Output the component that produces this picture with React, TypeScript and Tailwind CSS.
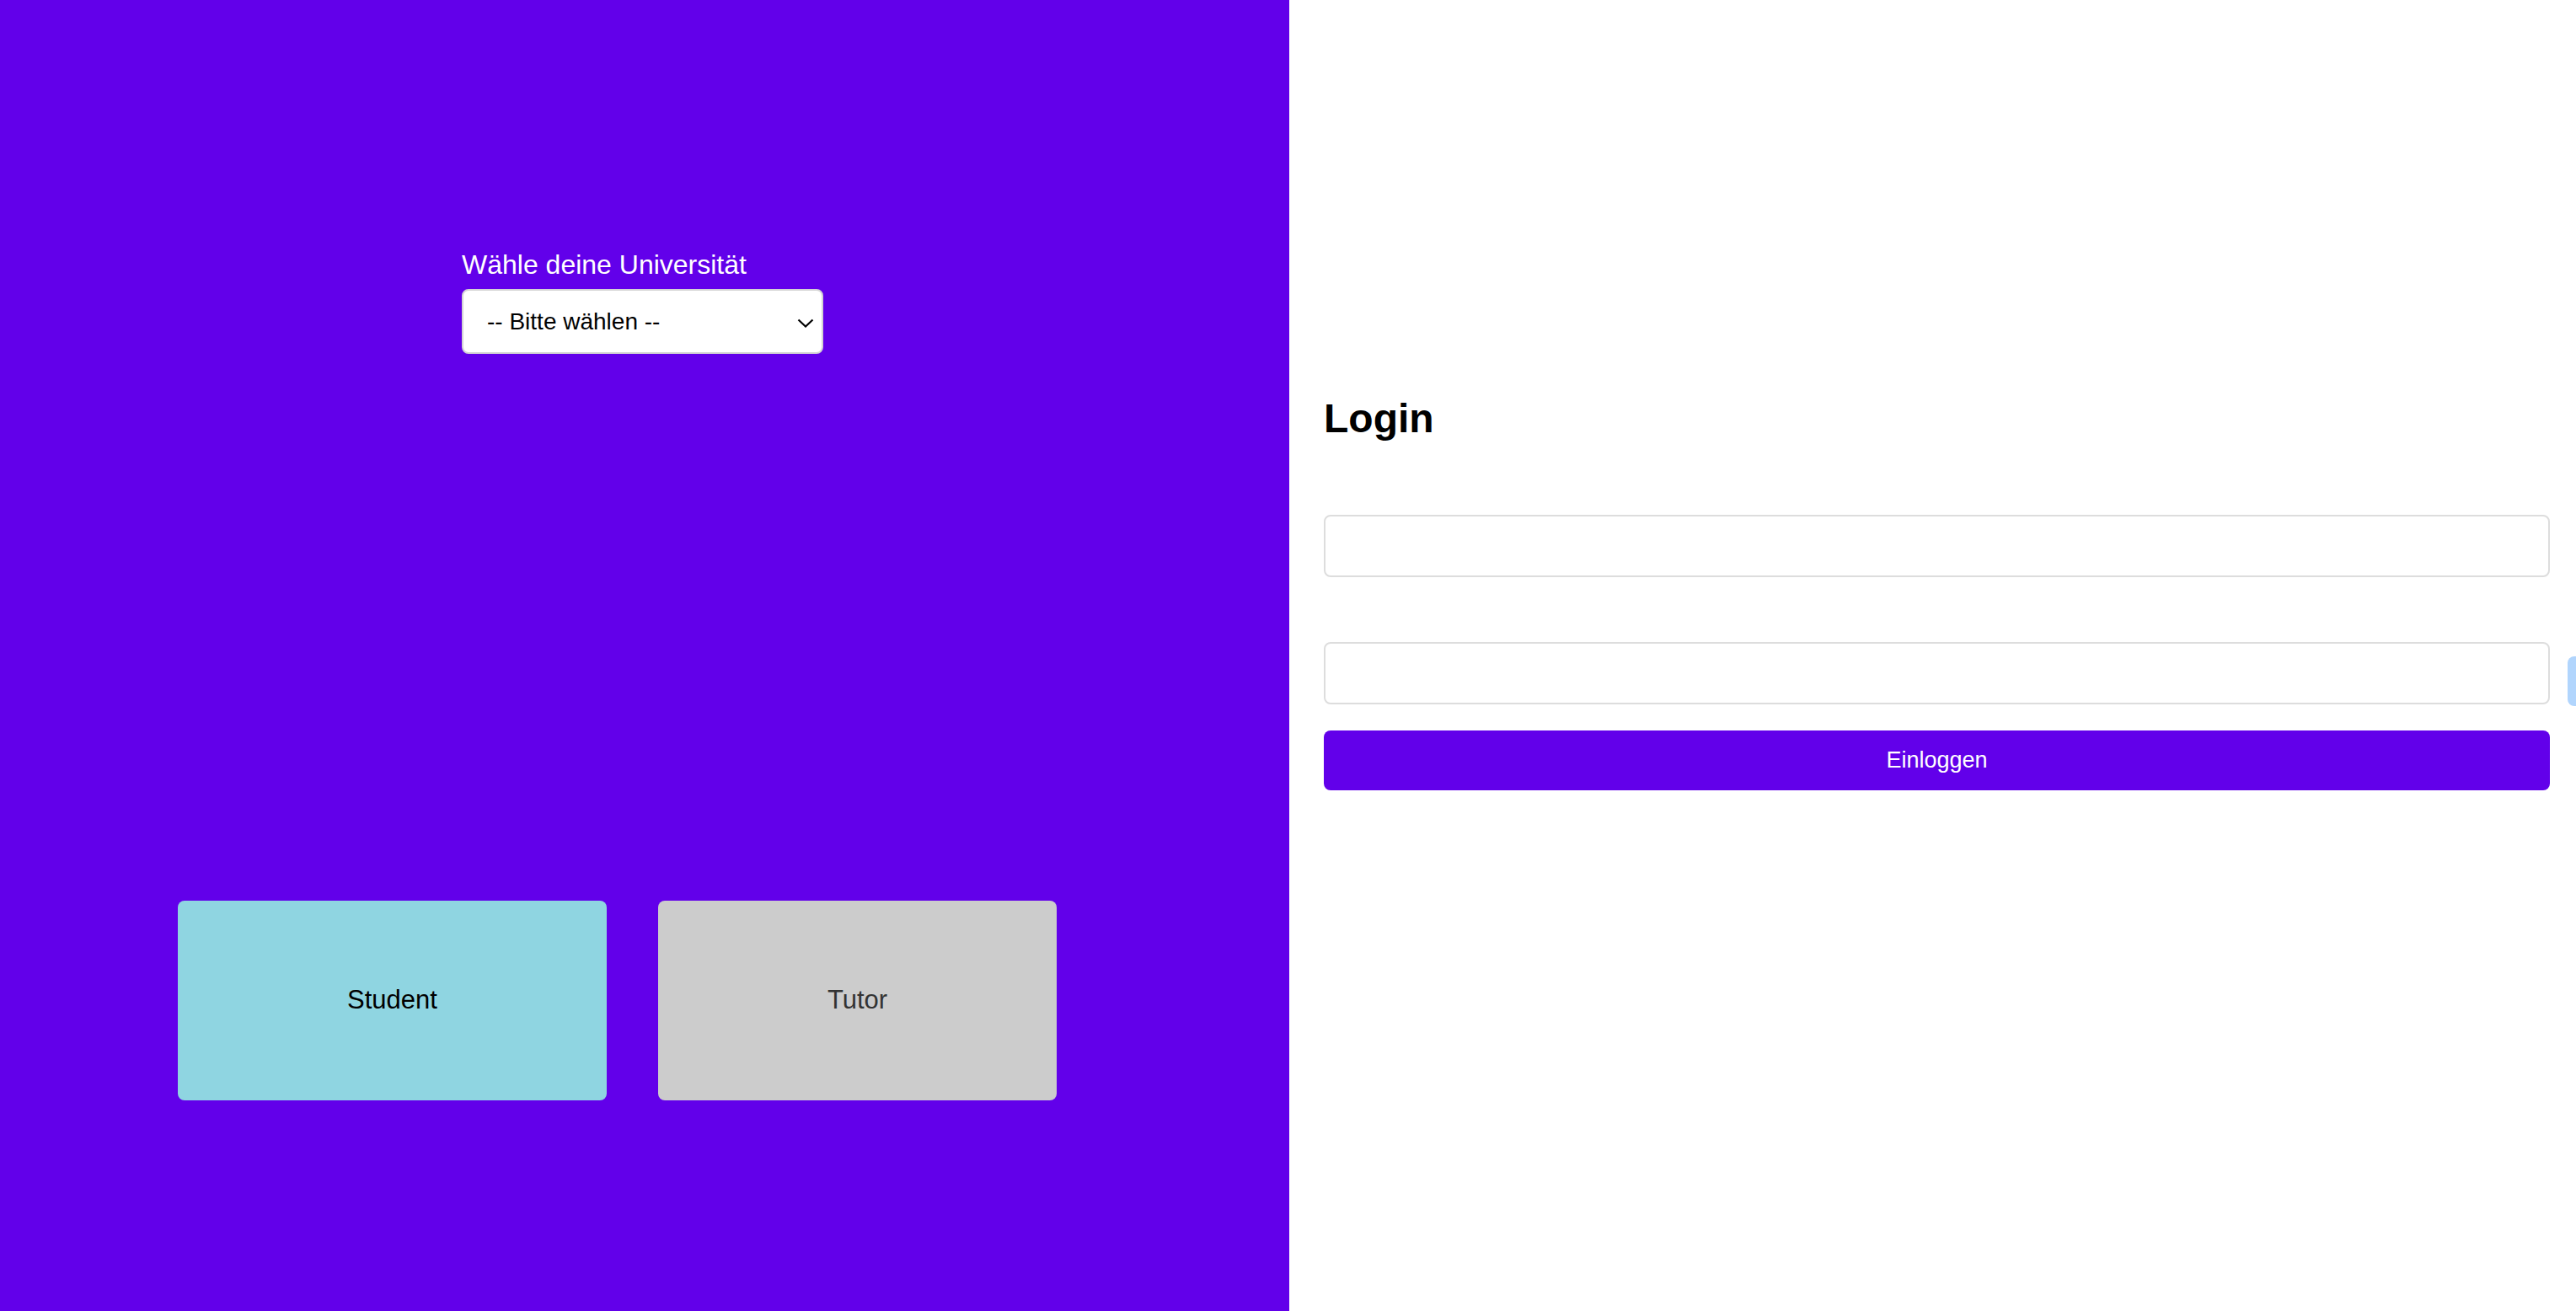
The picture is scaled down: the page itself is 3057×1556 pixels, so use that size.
export default function App() {
  return (
    <div className="flex h-[1556px] w-[3057px] overflow-hidden bg-white font-['Liberation_Sans',Arial,sans-serif]">
      {/* left side: university + role */}
      <div className="flex w-[1530px] shrink-0 flex-col bg-[#6200ea]">
        <div className="flex flex-col pl-[548px] pt-[296px]">
          <label className="text-[32px] leading-[36px] text-white">Wähle deine Universität</label>
          <div className="relative mt-[11px] w-[429px]">
            <select className="h-[77px] w-full appearance-none rounded-[8px] border-2 border-[#d4d4d4] bg-white pl-[28px] text-[28px] text-black outline-none">
              <option>-- Bitte wählen --</option>
            </select>
            <svg className="pointer-events-none absolute right-[11px] top-[35px]" width="20" height="11" viewBox="0 0 20 11">
              <path d="M1.5 1.5 L10 9.5 L18.5 1.5" fill="none" stroke="#000" strokeWidth="2.2" />
            </svg>
          </div>
        </div>

        <div className="mt-[649px] flex gap-[61px] pl-[211px]">
          <button className="flex h-[237px] w-[509px] items-center justify-center rounded-[8px] bg-[#8fd5e1] text-[31px] text-black">
            Student
          </button>
          <button className="flex h-[237px] w-[473px] items-center justify-center rounded-[8px] bg-[#cccccc] text-[31px] text-[#333333]">
            Tutor
          </button>
        </div>
      </div>

      {/* right side: login */}
      <div className="flex flex-1 flex-col pl-[41px] pt-[469px]">
        <h2 className="text-[48px] font-bold leading-[56px] text-black">Login</h2>

        <input className="mt-[86px] h-[74px] w-[1455px] shrink-0 rounded-[8px] border-2 border-[#dddddd] bg-white outline-none" />

        <div className="mt-[77px] flex">
          <input type="password" className="h-[74px] w-[1455px] shrink-0 rounded-[8px] border-2 border-[#dddddd] bg-white outline-none" />
          <div className="ml-[21px] mt-[17px] h-[59px] w-[60px] shrink-0 rounded-[8px] bg-[#b1d5fd]" />
        </div>

        <button className="mt-[29px] h-[71px] w-[1455px] rounded-[8px] bg-[#6200ea] text-[27px] text-white">
          Einloggen
        </button>
      </div>
    </div>
  )
}
